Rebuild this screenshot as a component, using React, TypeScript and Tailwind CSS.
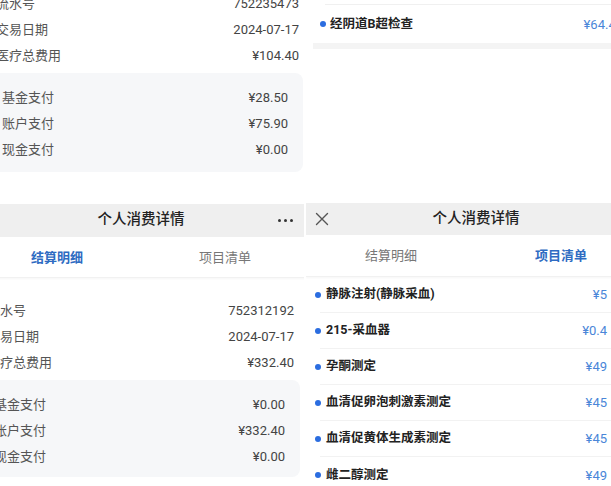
import React from "react";

const FONT = { fontFamily: "Roboto, 'Noto Sans CJK SC', 'Noto Sans', sans-serif" };

function Row({ label, value, h = "h-[26px]" }: { label: string; value: string; h?: string }) {
  return (
    <div className={`${h} flex items-center justify-between text-[13px] leading-none`}>
      <span className="text-[#555]">{label}</span>
      <span className="text-[#444]">{value}</span>
    </div>
  );
}

function Header({ left, right }: { left?: React.ReactNode; right?: React.ReactNode }) {
  return (
    <div className="relative h-full bg-[#efefef] flex items-center justify-center">
      {left}
      <span className="text-[14.5px] font-medium text-[#222] leading-none">个人消费详情</span>
      {right}
    </div>
  );
}

function Tabs({ active }: { active: 0 | 1 }) {
  const on = "text-[#2e6bc2] font-semibold";
  const off = "text-[#777]";
  return (
    <div className="h-full grid grid-cols-2 items-center text-[13px] leading-none border-b border-[#f1f1f1] shadow-[0_1px_2px_rgba(0,0,0,0.04)]">
      <span className={`text-center ${active === 0 ? on : off}`}>结算明细</span>
      <span className={`text-center ${active === 1 ? on : off}`}>项目清单</span>
    </div>
  );
}

function Item({ name, value, last }: { name: string; value: string; last?: boolean }) {
  return (
    <div className={`h-[36px] ml-[14px] flex items-center justify-between pr-[39px] ${last ? "" : "border-b border-[#f2f2f2]"}`}>
      <div className="flex items-center ml-[-5px]">
        <span className="w-[6px] h-[6px] rounded-full bg-[#2b6de0]" />
        <span className="ml-[5px] text-[12.5px] font-bold text-[#222] leading-none">{name}</span>
      </div>
      <span className="text-[13px] text-[#4a86d8] leading-none">{value}</span>
    </div>
  );
}

export default function App() {
  return (
    <div style={FONT} className="w-[611px] h-[486px] overflow-hidden bg-white grid grid-cols-[304px_305px] grid-rows-[200px_286px] gap-x-[2px]">
      {/* top-left */}
      <div className="overflow-hidden">
        <div className="ml-[-4px] mr-[5px] mt-[-10px]">
          <Row label="流水号" value="752235473" />
          <Row label="交易日期" value="2024-07-17" />
          <Row label="医疗总费用" value="¥104.40" />
          <div className="mt-[5px] ml-[-4px] mr-[-4px] bg-[#f6f7f9] rounded-lg pt-[11px] pb-[10px] pl-[10px] pr-[15px]">
            <Row label="基金支付" value="¥28.50" />
            <Row label="账户支付" value="¥75.90" />
            <Row label="现金支付" value="¥0.00" />
          </div>
        </div>
      </div>

      {/* top-right */}
      <div className="overflow-hidden">
        <div className="ml-[7px] mr-[-20px]">
          <div className="h-[5px] ml-[12px] border-b border-[#f0f0f0]" />
          <div className="h-[38px] flex items-center justify-between pl-[7px] pr-[8px]">
            <div className="flex items-center">
              <span className="w-[6px] h-[6px] rounded-full bg-[#2b6de0]" />
              <span className="ml-[4px] text-[12.5px] font-bold text-[#222] leading-none">经阴道B超检查</span>
            </div>
            <span className="text-[13px] text-[#4a86d8] leading-none">¥64.40</span>
          </div>
          <div className="h-[6px] bg-[#f4f4f4]" />
        </div>
      </div>

      {/* bottom-left */}
      <div className="overflow-hidden">
        <div className="w-[336px] ml-[-27px] pt-[4px]">
          <div className="h-[33px]">
            <Header
              right={
                <span className="absolute right-[16px] flex items-center gap-[3px]">
                  <span className="w-[3px] h-[3px] rounded-full bg-[#333]" />
                  <span className="w-[3px] h-[3px] rounded-full bg-[#333]" />
                  <span className="w-[3px] h-[3px] rounded-full bg-[#333]" />
                </span>
              }
            />
          </div>
          <div className="h-[41px]">
            <Tabs active={0} />
          </div>
          <div className="pl-[14px] pr-[15px] mt-[19px]">
            <Row label="流水号" value="752312192" />
            <Row label="交易日期" value="2024-07-17" />
            <Row label="医疗总费用" value="¥332.40" />
          </div>
          <div className="mt-[5px] ml-[10px] mr-[9px] bg-[#f6f7f9] rounded-lg pt-[11px] pb-[8px] pl-[11px] pr-[15px]">
            <Row label="基金支付" value="¥0.00" />
            <Row label="账户支付" value="¥332.40" />
            <Row label="现金支付" value="¥0.00" />
          </div>
        </div>
      </div>

      {/* bottom-right */}
      <div className="overflow-hidden">
        <div className="w-[340px] pt-[3px]">
          <div className="h-[32px]">
            <Header
              left={
                <svg className="absolute left-[9px]" width="14" height="14" viewBox="0 0 14 14" fill="none" stroke="#555" strokeWidth="1.4" strokeLinecap="round">
                  <path d="M1.5 1.5 L12.5 12.5 M12.5 1.5 L1.5 12.5" />
                </svg>
              }
            />
          </div>
          <div className="h-[42px]">
            <Tabs active={1} />
          </div>
          <Item name="静脉注射(静脉采血)" value="¥5" />
          <Item name="215-采血器" value="¥0.4" />
          <Item name="孕酮测定" value="¥49" />
          <Item name="血清促卵泡刺激素测定" value="¥45" />
          <Item name="血清促黄体生成素测定" value="¥45" />
          <Item name="雌二醇测定" value="¥49" last />
        </div>
      </div>
    </div>
  );
}
